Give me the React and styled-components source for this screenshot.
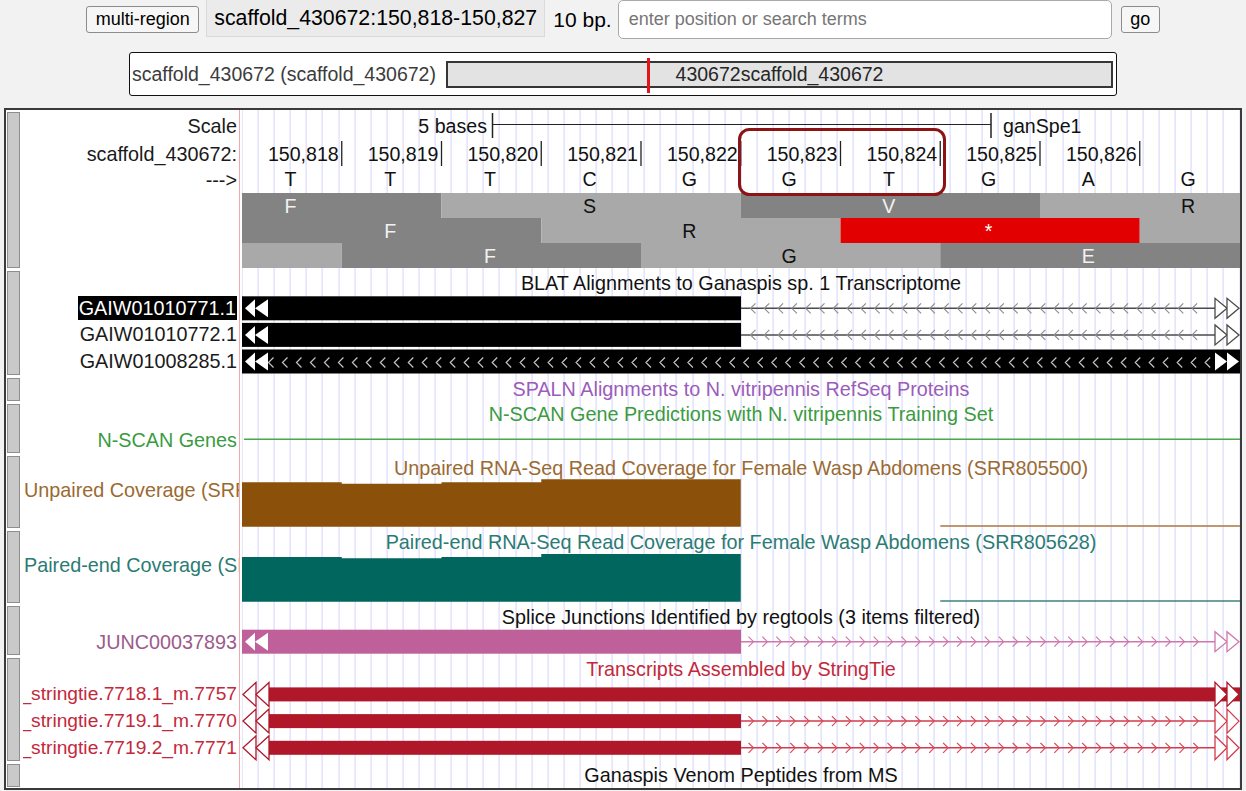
import React from 'react';
import styled, { createGlobalStyle } from 'styled-components';

const FONT = '"Liberation Sans", Arial, Helvetica, sans-serif';
const B = 99.75;
const W = 998;
const TF = '19.8px';

const GlobalStyle = createGlobalStyle`
  html, body { margin: 0; padding: 0; background: #f2f2f2; }
  body { font-family: ${FONT}; width: 1246px; height: 791px; overflow: hidden; }
  * { box-sizing: border-box; }
`;

const Page = styled.div`
  display: flex;
  flex-direction: column;
  align-items: center;
  width: 1246px;
`;

const Header = styled.div`
  display: flex;
  align-items: center;
  height: 39px;
`;

const Button = styled.button`
  width: ${p => p.$w}px;
  height: 27px;
  margin-left: ${p => p.$ml || 0}px;
  padding: 0;
  font: 18px ${FONT};
  color: #000;
  background: #f6f6f6;
  border: 1px solid #8c8c8c;
  border-radius: 3px;
`;

const PosBox = styled.div`
  align-self: flex-start;
  width: 339px;
  height: 37px;
  margin-left: 7px;
  padding-left: 7px;
  display: flex;
  align-items: center;
  font-size: 21.3px;
  color: #000;
  white-space: nowrap;
  background: #ebebeb;
  border: 1px solid #dadada;
  border-top: none;
`;

const BpText = styled.div`
  margin-left: 8px;
  font-size: 21px;
  color: #000;
  white-space: nowrap;
`;

const SearchInput = styled.input`
  width: 494px;
  height: 39px;
  margin-left: 6px;
  padding: 0 0 0 10px;
  font: 18px ${FONT};
  background: #fff;
  border: 1px solid #a9a9a9;
  border-radius: 5px;
  &::placeholder { color: #767676; }
`;

const Ideogram = styled.div`
  margin-top: 13px;
  width: 988px;
  height: 44px;
  display: flex;
  align-items: center;
  padding: 0 3px 0 2px;
  background: #fff;
  border: 1.5px solid #111;
  border-radius: 3px;
`;

const IdeoLabel = styled.div`
  flex: 1;
  font-size: 19.5px;
  color: #3c3c3c;
  white-space: nowrap;
`;

const IdeoBar = styled.div`
  position: relative;
  width: 667px;
  height: 27px;
  display: flex;
  align-items: center;
  justify-content: center;
  font-size: 19.5px;
  color: #262626;
  background: #e3e3e3;
  border: 2px solid #363636;
`;

const IdeoMarker = styled.div`
  position: absolute;
  left: 199px;
  top: -5px;
  width: 2.5px;
  height: 35px;
  background: #e5141b;
`;

const Panel = styled.div`
  margin-top: 12px;
  width: 1238px;
  display: flex;
  flex-direction: column;
  background: #fff;
  border: 2px solid #3a3a3a;
`;

const TrackRow = styled.div`
  display: grid;
  grid-template-columns: 17px 216px 3px 998px;
  height: ${p => p.$h}px;
`;

const Handle = styled.div`
  margin: 1.5px 3px 1.5px 1px;
  background: #c9c9c9;
  border: 1px solid #8e8e8e;
`;

const LabelCol = styled.div`
  display: flex;
  flex-direction: column;
  padding-top: ${p => p.$top}px;
  overflow: hidden;
  font-size: ${TF};
`;

const LabelRow = styled.div`
  height: ${p => p.$h}px;
  flex: none;
  display: flex;
  align-items: center;
  justify-content: ${p => (p.$align === 'left' ? 'flex-start' : 'flex-end')};
  padding: 0 2px 0 ${p => (p.$align === 'left' ? 1 : 0)}px;
  overflow: hidden;
  white-space: nowrap;
  font-size: ${p => p.$fs || TF};
  color: ${p => p.$color || '#1a1a1a'};
`;

const Hi = styled.span`
  height: 24px;
  line-height: 24px;
  padding: 0 1px;
  background: #000;
  color: #fff;
`;

const Divider = styled.div`
  border-left: 1px solid #f4a9a9;
`;

const DataCol = styled.div`
  display: flex;
  flex-direction: column;
  background-image: repeating-linear-gradient(
    90deg,
    transparent 0px,
    transparent 15.09px,
    #d3d3fa 15.09px,
    #d3d3fa 16.09px
  );
  background-position: 0.6px 0;
`;

const Title = styled.div`
  height: ${p => p.$h}px;
  flex: none;
  display: flex;
  align-items: center;
  justify-content: center;
  padding-top: ${p => p.$pad || 0}px;
  font-size: ${TF};
  white-space: nowrap;
  color: ${p => p.$color || '#111'};
`;

const Chart = styled.svg`
  display: block;
  flex: none;
  overflow: visible;
  text {
    font-family: ${FONT};
    font-size: 19.6px;
  }
`;

function range(a, b, step) {
  const r = [];
  for (let x = a; x <= b + 0.01; x += step) r.push(x);
  return r;
}

function Chevrons({ from, to, step, cy, dir, color, hh = 4.5 }) {
  const d = range(from, to, step)
    .map(x =>
      dir === 'left'
        ? `M${x + 2.5},${cy - hh} L${x - 2.5},${cy} L${x + 2.5},${cy + hh}`
        : `M${x - 2.5},${cy - hh} L${x + 2.5},${cy} L${x - 2.5},${cy + hh}`
    )
    .join(' ');
  return <path d={d} fill="none" stroke={color} strokeWidth="1.2" />;
}

function Arrows({ spans, cy, h, dir, fill, stroke }) {
  return (
    <g>
      {spans.map(([a, b], i) => (
        <polygon
          key={i}
          points={
            dir === 'left'
              ? `${a},${cy} ${b},${cy - h} ${b},${cy + h}`
              : `${b},${cy} ${a},${cy - h} ${a},${cy + h}`
          }
          fill={fill}
          stroke={stroke || 'none'}
          strokeWidth={stroke ? 1.3 : 0}
          strokeLinejoin="miter"
        />
      ))}
    </g>
  );
}

const LEFT_IN = [[3, 13], [13, 26]];
const RIGHT_END = [[973, 985], [985, 997]];

function Track({ h, titleH, titlePad, title, titleColor, labels = [], labelRowH = 26, labelAlign, labelSize, chartH, children }) {
  return (
    <TrackRow $h={h}>
      <Handle />
      <LabelCol $top={titleH}>
        {labels.map((l, i) => (
          <LabelRow key={i} $h={labelRowH} $align={labelAlign} $fs={labelSize} $color={l.color}>
            {l.highlight ? <Hi>{l.text}</Hi> : l.text}
          </LabelRow>
        ))}
      </LabelCol>
      <Divider />
      <DataCol>
        <Title $h={titleH} $pad={titlePad} $color={titleColor}>{title}</Title>
        {children && (
          <Chart width={W} height={chartH}>
            {children}
          </Chart>
        )}
      </DataCol>
    </TrackRow>
  );
}

const FRAME_COLORS = {
  d: ['#838383', '#f2f2f2'],
  l: ['#a9a9a9', '#111'],
  r: ['#e20000', '#fff'],
};

const FRAMES = [
  [[0, 2, 'd', 'F', 0.5], [2, 5, 'l', 'S', 3.5], [5, 8, 'd', 'V', 6.5], [8, 10, 'l', 'R', 9.5]],
  [[0, 3, 'd', 'F', 1.5], [3, 6, 'l', 'R', 4.5], [6, 9, 'r', '*', 7.5], [9, 10, 'l', null, 0]],
  [[0, 1, 'l', null, 0], [1, 4, 'd', 'F', 2.5], [4, 7, 'l', 'G', 5.5], [7, 10, 'd', 'E', 8.5]],
];

function RulerTrack() {
  const bases = 'TTTCGGTGAG'.split('');
  return (
    <TrackRow $h={159}>
      <Handle />
      <LabelCol $top={2}>
        <LabelRow $h={28}>Scale</LabelRow>
        <LabelRow $h={28}>scaffold_430672:</LabelRow>
        <LabelRow $h={24}>---&gt;</LabelRow>
      </LabelCol>
      <Divider />
      <DataCol>
        <Chart width={W} height={159}>
          <line x1={250.5} x2={749} y1={14.5} y2={14.5} stroke="#222" strokeWidth="1.2" />
          <line x1={250.5} x2={250.5} y1={3} y2={28} stroke="#222" strokeWidth="1.5" />
          <line x1={749} x2={749} y1={3} y2={28} stroke="#222" strokeWidth="1.5" />
          <text x={245} y={23} textAnchor="end" fill="#111">5 bases</text>
          <text x={761} y={23} fill="#111">ganSpe1</text>
          {Array.from({ length: 9 }, (_, i) => (
            <g key={i}>
              <line x1={(i + 1) * B} x2={(i + 1) * B} y1={31} y2={56} stroke="#222" strokeWidth="1.3" />
              <text x={(i + 1) * B - 3} y={51} textAnchor="end" fill="#111">{`150,${818 + i}`}</text>
            </g>
          ))}
          {bases.map((b, i) => (
            <text key={i} x={(i + 0.5) * B - 1.5} y={76} textAnchor="middle" fill="#111">{b}</text>
          ))}
          {FRAMES.map((row, r) =>
            row.map(([a, b, c, letter, center], k) => {
              const x = a * B;
              const w = (b === 10 ? W : b * B) - x;
              const y = 83 + r * 25;
              return (
                <g key={`${r}-${k}`}>
                  <rect x={x} y={y} width={w} height={25} fill={FRAME_COLORS[c][0]} />
                  {letter && (
                    <text x={center * B - 1.5} y={y + 19.5} textAnchor="middle" fill={FRAME_COLORS[c][1]}>{letter}</text>
                  )}
                </g>
              );
            })
          )}
          <rect x={497.5} y={19.5} width={205} height={65} rx={10} ry={10} fill="none" stroke="#8c1414" strokeWidth="3" />
        </Chart>
      </DataCol>
    </TrackRow>
  );
}

function BlatRows() {
  const cys = [13.3, 39.9, 66.5];
  return (
    <>
      {cys.slice(0, 2).map((cy, i) => (
        <g key={i}>
          <line x1={499} x2={985} y1={cy} y2={cy} stroke="#4a4a4a" strokeWidth="1.5" />
          <Chevrons from={511} to={966} step={13.8} cy={cy} dir="left" color="#8f8f8f" hh={5} />
          <rect x={0} y={cy - 12} width={499} height={24} fill="#000" />
          <Arrows spans={LEFT_IN} cy={cy} h={9} dir="left" fill="#fff" />
          <Arrows spans={RIGHT_END} cy={cy} h={10} dir="right" fill="#fff" stroke="#4a4a4a" />
        </g>
      ))}
      <rect x={0} y={cys[2] - 12} width={W} height={24} fill="#000" />
      <Chevrons from={29} to={966} step={13.98} cy={cys[2] + 1} dir="left" color="#c4c4c4" hh={5} />
      <Arrows spans={LEFT_IN} cy={cys[2]} h={9} dir="left" fill="#fff" />
      <Arrows spans={RIGHT_END} cy={cys[2]} h={9} dir="right" fill="#fff" />
    </>
  );
}

function Coverage({ color, lineColor, tops, bottom, lineY }) {
  const pts = [
    [0, bottom],
    [0, tops[0]], [B, tops[0]],
    [B, tops[1]], [2 * B, tops[1]],
    [2 * B, tops[2]], [3 * B, tops[2]],
    [3 * B, tops[3]], [5 * B, tops[3]],
    [5 * B, bottom],
  ].map(p => p.join(',')).join(' ');
  return (
    <>
      <polygon points={pts} fill={color} />
      <line x1={7 * B} x2={W} y1={lineY} y2={lineY} stroke={lineColor} strokeWidth="1.5" />
    </>
  );
}

function SpliceRow() {
  const cy = 12.7;
  return (
    <>
      <line x1={499} x2={985} y1={cy} y2={cy} stroke="#d077ad" strokeWidth="1.5" />
      <Chevrons from={509} to={966} step={13.9} cy={cy} dir="right" color="#d077ad" hh={5} />
      <rect x={0} y={cy - 12} width={499} height={24} fill="#c0609a" />
      <Arrows spans={LEFT_IN} cy={cy} h={9} dir="left" fill="#fff" />
      <Arrows spans={RIGHT_END} cy={cy} h={10} dir="right" fill="#fff" stroke="#d077ad" />
    </>
  );
}

const ST_RED = '#b0182a';
const ST_LEFT = [[1, 14], [14, 27]];

function StringTieRows() {
  const cys = [13.4, 40.1, 66.8];
  return (
    <>
      <rect x={27} y={cys[0] - 7} width={W - 27} height={14} fill={ST_RED} />
      <Arrows spans={ST_LEFT} cy={cys[0]} h={12} dir="left" fill="#fff" stroke={ST_RED} />
      <Arrows spans={RIGHT_END} cy={cys[0]} h={12} dir="right" fill="#fff" stroke={ST_RED} />
      {cys.slice(1).map((cy, i) => (
        <g key={i}>
          <line x1={499} x2={985} y1={cy} y2={cy} stroke="#d33a4b" strokeWidth="1.5" />
          <Chevrons from={509} to={966} step={13.9} cy={cy} dir="right" color="#d84858" hh={5} />
          <rect x={27} y={cy - 7} width={472} height={14} fill={ST_RED} />
          <Arrows spans={ST_LEFT} cy={cy} h={12} dir="left" fill="#fff" stroke={ST_RED} />
          <Arrows spans={RIGHT_END} cy={cy} h={12} dir="right" fill="#fff" stroke="#d33a4b" />
        </g>
      ))}
    </>
  );
}

const GREEN = '#3a9b3f';
const BROWN_T = '#9a6a32';
const TEAL_T = '#2a7b74';
const RED_T = '#c4283b';

export default function App() {
  return (
    <>
      <GlobalStyle />
      <Page>
        <Header>
          <Button $w={113}>multi-region</Button>
          <PosBox>scaffold_430672:150,818-150,827</PosBox>
          <BpText>10 bp.</BpText>
          <SearchInput placeholder="enter position or search terms" />
          <Button $w={39} $ml={9}>go</Button>
        </Header>
        <Ideogram>
          <IdeoLabel>scaffold_430672 (scaffold_430672)</IdeoLabel>
          <IdeoBar>
            430672scaffold_430672
            <IdeoMarker />
          </IdeoBar>
        </Ideogram>
        <Panel>
          <RulerTrack />
          <Track
            h={107}
            titleH={26}
            titlePad={2}
            title="BLAT Alignments to Ganaspis sp. 1 Transcriptome"
            labels={[
              { text: 'GAIW01010771.1', highlight: true },
              { text: 'GAIW01010772.1' },
              { text: 'GAIW01008285.1' },
            ]}
            labelRowH={26.6}
            chartH={81}
          >
            <BlatRows />
          </Track>
          <Track
            h={26}
            titleH={26}
            titlePad={1.5}
            title="SPALN Alignments to N. vitripennis RefSeq Proteins"
            titleColor="#9b5cba"
          />
          <Track
            h={52}
            titleH={25}
            title="N-SCAN Gene Predictions with N. vitripennis Training Set"
            titleColor={GREEN}
            labels={[{ text: 'N-SCAN Genes', color: GREEN }]}
            labelRowH={26}
            chartH={27}
          >
            <line x1={2} x2={W} y1={12.3} y2={12.3} stroke="#4aa74c" strokeWidth="1.5" />
          </Track>
          <Track
            h={75}
            titleH={24}
            titlePad={4}
            title="Unpaired RNA-Seq Read Coverage for Female Wasp Abdomens (SRR805500)"
            titleColor={BROWN_T}
            labels={[{ text: 'Unpaired Coverage (SRR805500)', color: BROWN_T }]}
            labelRowH={24}
            labelAlign="left"
            chartH={51}
          >
            <Coverage color="#8b510b" lineColor="#a9773f" tops={[4.3, 5.7, 4.3, 1.3]} bottom={48.7} lineY={48} />
          </Track>
          <Track
            h={75}
            titleH={24}
            titlePad={3}
            title="Paired-end RNA-Seq Read Coverage for Female Wasp Abdomens (SRR805628)"
            titleColor={TEAL_T}
            labels={[{ text: 'Paired-end Coverage (SRR805628)', color: TEAL_T }]}
            labelRowH={24}
            labelAlign="left"
            chartH={51}
          >
            <Coverage color="#00665e" lineColor="#3c837d" tops={[4, 5.3, 4, 1]} bottom={48.7} lineY={48} />
          </Track>
          <Track
            h={52}
            titleH={25}
            titlePad={1.5}
            title="Splice Junctions Identified by regtools (3 items filtered)"
            labels={[{ text: 'JUNC00037893', color: '#9c5b8b' }]}
            labelRowH={26}
            chartH={27}
          >
            <SpliceRow />
          </Track>
          <Track
            h={106}
            titleH={25}
            titlePad={1}
            title="Transcripts Assembled by StringTie"
            titleColor={RED_T}
            labels={[
              { text: '_stringtie.7718.1_m.7757', color: RED_T },
              { text: '_stringtie.7719.1_m.7770', color: RED_T },
              { text: '_stringtie.7719.2_m.7771', color: RED_T },
            ]}
            labelRowH={26.7}
            labelSize="19.2px"
            chartH={81}
          >
            <StringTieRows />
          </Track>
          <Track h={26} titleH={26} titlePad={1.5} title="Ganaspis Venom Peptides from MS" />
        </Panel>
      </Page>
    </>
  );
}
